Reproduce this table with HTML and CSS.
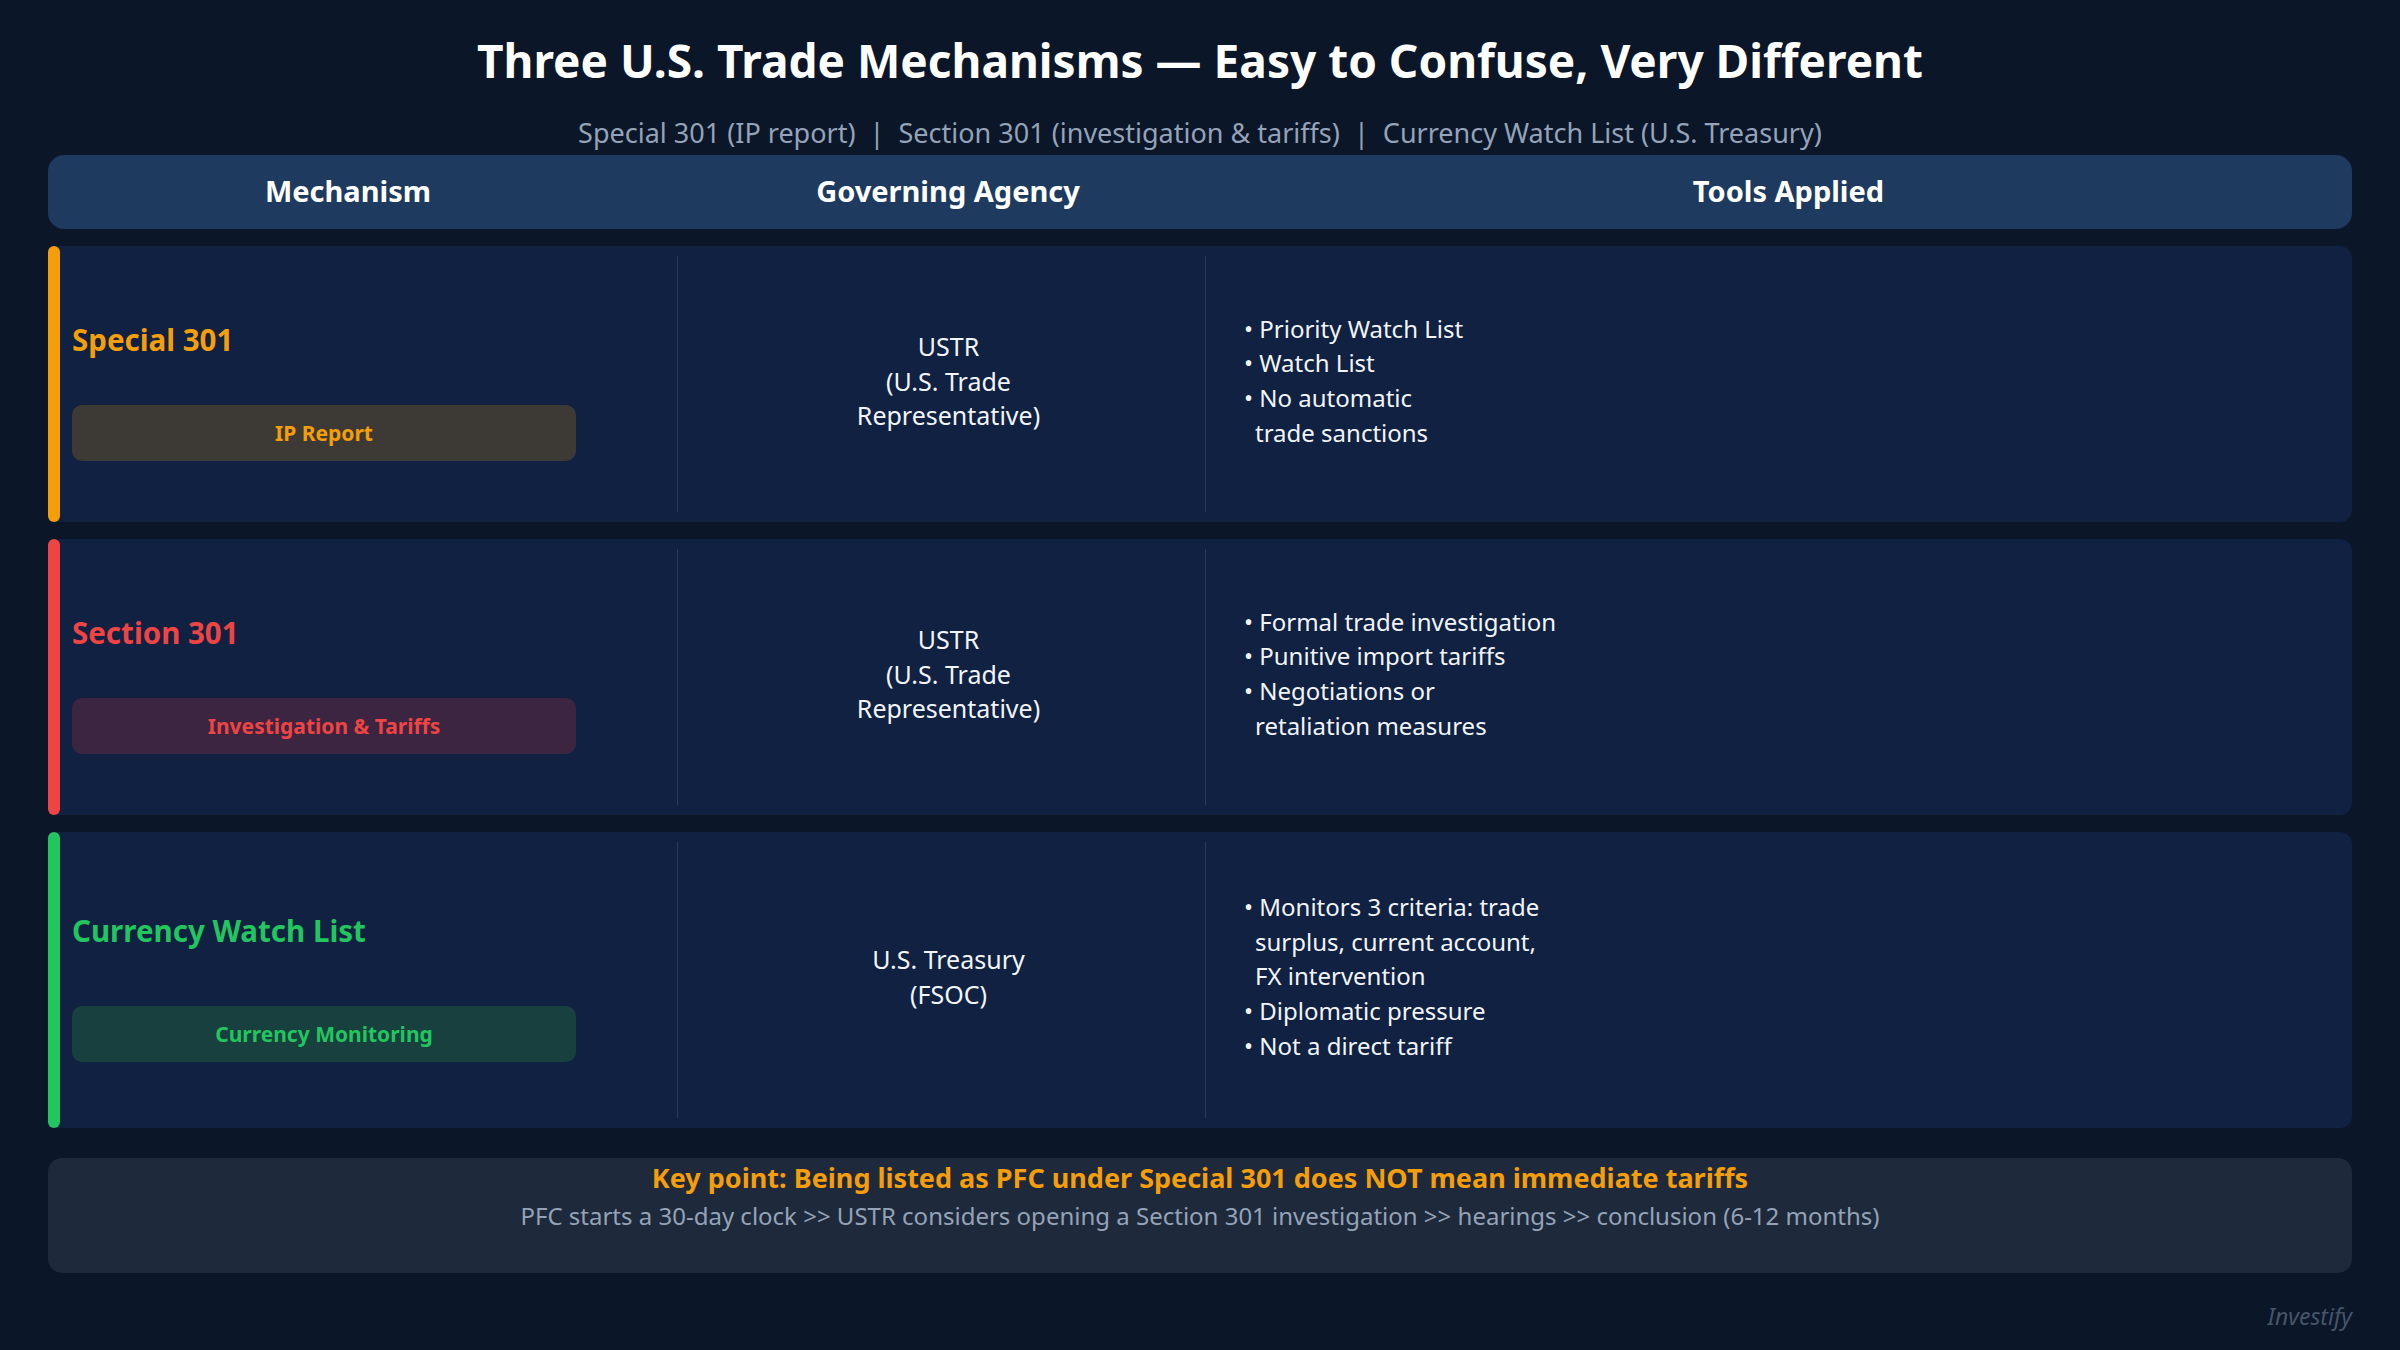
FILE: index.html
```html
<!DOCTYPE html>
<html lang="en">
<head>
<meta charset="utf-8">
<title>Three U.S. Trade Mechanisms</title>
<link rel="stylesheet" href="styles.css">
</head>
<body>
<div class="page">
  <h1 class="title">Three U.S. Trade Mechanisms — Easy to Confuse, Very Different</h1>
  <p class="subtitle">Special 301 (IP report)&nbsp;&nbsp;|&nbsp;&nbsp;Section 301 (investigation &amp; tariffs)&nbsp;&nbsp;|&nbsp;&nbsp;Currency Watch List (U.S. Treasury)</p>

  <div class="head">
    <div class="head-cell">Mechanism</div>
    <div class="head-cell">Governing Agency</div>
    <div class="head-cell">Tools Applied</div>
  </div>

  <div class="row row-amber">
    <div class="accent"></div>
    <div class="mech">
      <div class="mech-name">Special 301</div>
      <div class="badge">IP Report</div>
    </div>
    <div class="divider"></div>
    <div class="agency">
      <div>USTR</div>
      <div>(U.S. Trade</div>
      <div>Representative)</div>
    </div>
    <div class="divider"></div>
    <div class="tools">
      <div class="item">• Priority Watch List</div>
      <div class="item">• Watch List</div>
      <div class="item">• No automatic</div>
      <div class="item cont">trade sanctions</div>
    </div>
  </div>

  <div class="row row-red">
    <div class="accent"></div>
    <div class="mech">
      <div class="mech-name">Section 301</div>
      <div class="badge">Investigation &amp; Tariffs</div>
    </div>
    <div class="divider"></div>
    <div class="agency">
      <div>USTR</div>
      <div>(U.S. Trade</div>
      <div>Representative)</div>
    </div>
    <div class="divider"></div>
    <div class="tools">
      <div class="item">• Formal trade investigation</div>
      <div class="item">• Punitive import tariffs</div>
      <div class="item">• Negotiations or</div>
      <div class="item cont">retaliation measures</div>
    </div>
  </div>

  <div class="row row-green">
    <div class="accent"></div>
    <div class="mech">
      <div class="mech-name">Currency Watch List</div>
      <div class="badge">Currency Monitoring</div>
    </div>
    <div class="divider"></div>
    <div class="agency">
      <div>U.S. Treasury</div>
      <div>(FSOC)</div>
    </div>
    <div class="divider"></div>
    <div class="tools">
      <div class="item">• Monitors 3 criteria: trade</div>
      <div class="item cont">surplus, current account,</div>
      <div class="item cont">FX intervention</div>
      <div class="item">• Diplomatic pressure</div>
      <div class="item">• Not a direct tariff</div>
    </div>
  </div>

  <div class="note">
    <div class="note-key">Key point: Being listed as PFC under Special 301 does NOT mean immediate tariffs</div>
    <div class="note-flow">PFC starts a 30-day clock &gt;&gt; USTR considers opening a Section 301 investigation &gt;&gt; hearings &gt;&gt; conclusion (6-12 months)</div>
  </div>

  <div class="brand">Investify</div>
</div>
</body>
</html>
```

FILE: styles.css
```css
* { box-sizing: border-box; }

html, body {
  margin: 0;
  padding: 0;
}

body {
  width: 2400px;
  height: 1350px;
  background: #0b1628;
  font-family: "Noto Sans", "Open Sans", sans-serif;
  color: #e2e8f0;
  overflow: hidden;
}

.page {
  padding: 0 48px;
  display: flex;
  flex-direction: column;
}

.title {
  margin: 32px 0 0;
  font-size: 46px;
  line-height: 56px;
  font-weight: 700;
  color: #ffffff;
  text-align: center;
}

.subtitle {
  margin: 27px 0 0;
  font-size: 27px;
  line-height: 36px;
  color: #94a3b8;
  text-align: center;
}

.head {
  margin-top: 4px;
  height: 74px;
  background: #1e3a5f;
  border-radius: 16px;
  display: grid;
  grid-template-columns: 600px 600px 1fr;
  padding: 0 23px 3px 0;
  align-items: center;
}

.head-cell {
  text-align: center;
  font-size: 29px;
  line-height: 38px;
  font-weight: 700;
  color: #ffffff;
}

.row {
  margin-top: 17px;
  min-height: 276px;
  background: #102142;
  border-radius: 12px;
  display: grid;
  grid-template-columns: 12px 617px 1px 527px 1px 1fr;
}

.accent {
  border-radius: 6px;
}

.row-amber .accent { background: #f59e0b; }
.row-red .accent { background: #ef4444; }
.row-green .accent { background: #22c55e; }

.mech {
  padding-left: 12px;
  display: flex;
  flex-direction: column;
}

.mech::before {
  content: "";
  flex: 1 0 65px;
}

.mech::after {
  content: "";
  flex: 1 0 51px;
}

.mech-name {
  flex: 2 0 64px;
  font-size: 29.5px;
  line-height: 38px;
  font-weight: 700;
}

.badge {
  flex: none;
  width: 504px;
  height: 56px;
  border-radius: 10px;
  display: flex;
  align-items: center;
  justify-content: center;
  font-size: 21px;
  font-weight: 700;
}

.row-amber .mech-name, .row-amber .badge { color: #f59e0b; }
.row-red .mech-name, .row-red .badge { color: #ef4444; }
.row-green .mech-name, .row-green .badge { color: #22c55e; }

.row-amber .badge { background: #3d3a35; }
.row-red .badge { background: #3b2540; }
.row-green .badge { background: #17403f; }

.divider {
  background: #2b3b57;
  margin: 10px 0;
}

.agency {
  padding: 0 0 6px 14px;
  display: flex;
  flex-direction: column;
  justify-content: center;
  align-items: center;
  text-align: center;
  font-size: 25px;
  line-height: 34.5px;
  color: #f1f5f9;
}

.tools {
  padding: 58px 0 64px 38px;
  display: flex;
  flex-direction: column;
  justify-content: center;
  font-size: 24px;
  line-height: 34.7px;
  color: #f1f5f9;
}

.item.cont {
  padding-left: 11px;
}

.note {
  margin-top: 30px;
  height: 115px;
  background: #1e293b;
  border-radius: 14px;
  padding-top: 3px;
  text-align: center;
}

.note-key {
  font-size: 27px;
  line-height: 34px;
  font-weight: 700;
  color: #f59e0b;
}

.note-flow {
  margin-top: 5px;
  font-size: 24px;
  line-height: 32px;
  color: #94a3b8;
}

.brand {
  margin-top: 28px;
  text-align: right;
  font-size: 23px;
  line-height: 30px;
  font-style: italic;
  color: #475569;
}
```
